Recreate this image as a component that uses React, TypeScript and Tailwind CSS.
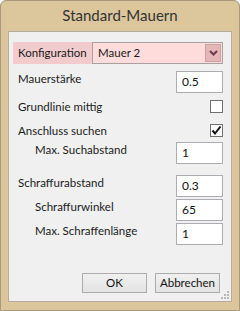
import React from "react";

const font = { fontFamily: 'Lato, "Noto Sans", sans-serif' };

function Input({ value }: { value: string }) {
  return (
    <div className="w-[47px] h-[22px] bg-white border border-[#abadb3] flex items-center pl-[5px] text-[12px] text-[#111]">
      {value}
    </div>
  );
}

function Checkbox({ checked }: { checked?: boolean }) {
  return (
    <div className="w-[13px] h-[13px] bg-white border border-[#707070] flex items-center justify-center">
      {checked && (
        <svg width="11" height="11" viewBox="0 0 11 11">
          <path d="M1.5 5.5 L4 8.5 L9.5 1.5" fill="none" stroke="#111" strokeWidth="2" />
        </svg>
      )}
    </div>
  );
}

export default function App() {
  return (
    <div
      className="w-[240px] h-[311px] bg-[#dcc69c] border border-[#a8977a] rounded-t-[6px] flex flex-col"
      style={font}
    >
      <div className="h-[30px] flex items-center justify-center text-[15px] text-[#333] pb-[1px]">
        Standard-Mauern
      </div>
      <div className="mx-[7px] h-[271px] bg-[#f0f0f0] border border-[#b4ad9f] flex flex-col relative text-[11.5px] text-[#1a1a1a] leading-[16px]">
        {/* Konfiguration */}
        <div className="mt-[10px] ml-[4px] mr-[8px] h-[22px] bg-[#f2cccc] flex items-center">
          <div className="w-[79px] pl-[5px]">Konfiguration</div>
          <div className="flex-1 h-[22px] bg-[#ffdcdc] border border-[#aaa0a0] flex items-center pl-[5px]">
            <span className="flex-1">Mauer 2</span>
            <div className="w-[16px] h-[18px] mr-[1px] bg-[#e3b7b7] border border-[#c9a2a2] flex items-center justify-center">
              <svg width="9" height="6" viewBox="0 0 9 6">
                <path d="M1 1 L4.5 4.5 L8 1" fill="none" stroke="#6b3a48" strokeWidth="2" />
              </svg>
            </div>
          </div>
        </div>

        {/* Mauerstärke */}
        <div className="mt-[7px] pl-[9px] pr-[8px] flex items-start justify-between">
          <span>Mauerstärke</span>
          <Input value="0.5" />
        </div>

        {/* Grundlinie */}
        <div className="mt-[7px] pl-[9px] pr-[8px] flex items-center justify-between h-[13px]">
          <span>Grundlinie mittig</span>
          <Checkbox />
        </div>

        {/* Anschluss */}
        <div className="mt-[11px] pl-[9px] pr-[8px] flex items-center justify-between h-[13px]">
          <span>Anschluss suchen</span>
          <Checkbox checked />
        </div>

        {/* Max. Suchabstand */}
        <div className="mt-[5px] pl-[26px] pr-[8px] flex items-start justify-between">
          <span>Max. Suchabstand</span>
          <Input value="1" />
        </div>

        {/* Schraffurabstand */}
        <div className="mt-[11px] pl-[9px] pr-[8px] flex items-start justify-between">
          <span>Schraffurabstand</span>
          <Input value="0.3" />
        </div>

        <div className="mt-[2px] pl-[26px] pr-[8px] flex items-start justify-between">
          <span>Schraffurwinkel</span>
          <Input value="65" />
        </div>

        <div className="mt-[2px] pl-[26px] pr-[8px] flex items-start justify-between">
          <span>Max. Schraffenlänge</span>
          <Input value="1" />
        </div>

        <div className="flex-1" />

        <div className="flex justify-end gap-[8px] mr-[11px] mb-[8px]">
          <button className="w-[65px] h-[20px] bg-gradient-to-b from-[#f0f0f0] to-[#e3e3e3] border border-[#acacac] text-[11.5px] text-[#111] flex items-center justify-center">
            OK
          </button>
          <button className="w-[65px] h-[20px] bg-gradient-to-b from-[#f0f0f0] to-[#e3e3e3] border border-[#acacac] text-[11.5px] text-[#111] flex items-center justify-center">
            Abbrechen
          </button>
        </div>

        <svg className="absolute right-[2px] bottom-[2px]" width="9" height="9" viewBox="0 0 9 9">
          {[
            [7, 1],
            [4, 4],
            [7, 4],
            [1, 7],
            [4, 7],
            [7, 7],
          ].map(([x, y], i) => (
            <rect key={i} x={x} y={y} width="2" height="2" fill="#b8b8b8" />
          ))}
        </svg>
      </div>
    </div>
  );
}
